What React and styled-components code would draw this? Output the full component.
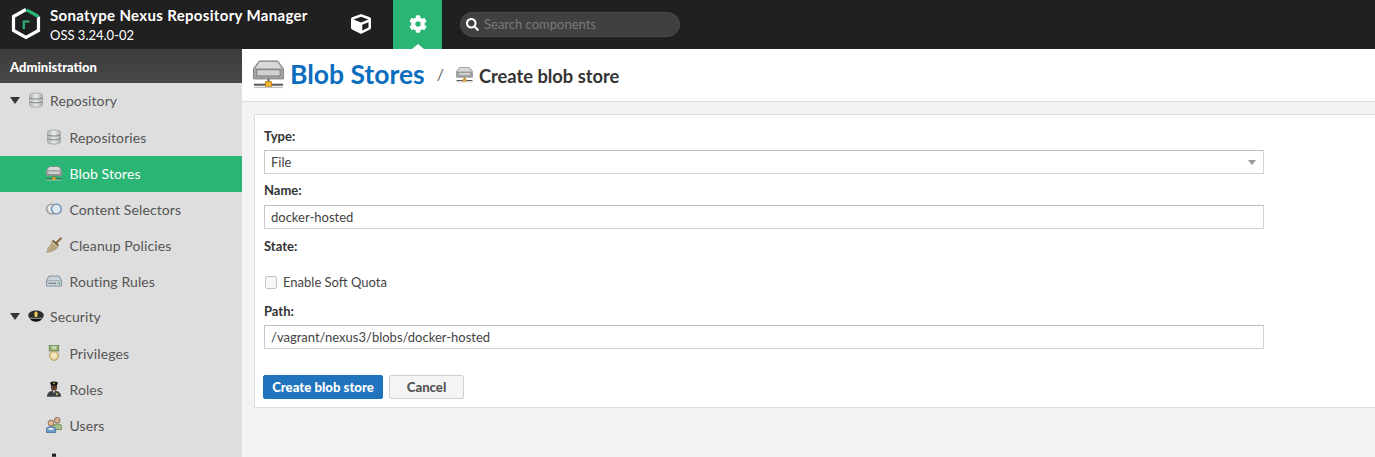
import React from "react";
import styled, { createGlobalStyle } from "styled-components";
import { FaCube, FaCog, FaSearch } from "react-icons/fa";

const Global = createGlobalStyle`
  html, body { margin: 0; padding: 0; height: 100%; overflow: hidden; }
  body { font-family: Lato, "Open Sans", "Liberation Sans", sans-serif; background: #f3f3f3; }
  #root { height: 457px; }
  * { box-sizing: border-box; }
`;

const Page = styled.div`
  display: flex; flex-direction: column; height: 457px; width: 1375px; overflow: hidden;
`;
const Header = styled.header`
  display: flex; align-items: stretch; height: 49px; background: #202020; flex: none;
`;
const Brand = styled.div`
  display: flex; align-items: center; width: 336px; padding-left: 11px; gap: 9px;
`;
const BrandText = styled.div`
  display: flex; flex-direction: column; color: #fff; gap: 4px; margin-top: -1px;
`;
const BrandTitle = styled.div`
  font-size: 15px; font-weight: 700; line-height: 18px; white-space: nowrap; letter-spacing: 0.33px;
`;
const BrandVersion = styled.div`
  font-size: 13px; line-height: 15px; font-weight: 400;
`;
const HeaderTab = styled.div`
  position: relative; display: flex; align-items: center; justify-content: center;
  width: 49px; color: #fff; font-size: ${p => p.$size || 18}px; margin-right: ${p => p.$gap || 0}px;
  background: ${p => (p.$active ? "#2ab574" : "transparent")};
  padding-bottom: 2px;
  ${p => p.$active ? `&::after {
    content: ""; position: absolute; left: 50%; bottom: 0; margin-left: -6px;
    border-left: 6px solid transparent; border-right: 6px solid transparent; border-bottom: 5px solid #fff;
  }` : ""}
`;
const Search = styled.div`
  display: flex; align-items: center; gap: 5px; align-self: center; width: 220px; height: 25px;
  margin-left: 18px; margin-bottom: 1px; padding-left: 5px; border-radius: 13px;
  background: #404040; border: 1px solid #4a4a4a; color: #fff;
`;
const SearchText = styled.span`
  color: #7a7a7a; font-size: 13px;
`;
const Main = styled.div`
  display: flex; flex: 1; min-height: 0;
`;
const Sidebar = styled.aside`
  width: 242px; flex: none; background: #dedede; overflow: hidden;
`;
const SideHead = styled.div`
  display: flex; align-items: center; height: 34px; padding: 2px 0 0 10px;
  background: linear-gradient(#3c3c3c, #484848); color: #fff; font-size: 13px; font-weight: 900;
`;
const Tree = styled.nav`
  display: flex; flex-direction: column; padding-top: 1px;
`;
const NavRow = styled.div`
  display: flex; align-items: center; height: 36px; flex: none;
  padding: ${p => (p.$top ? "0 0 4px 10px" : "0 0 2px 46px")};
  background: ${p => (p.$active ? "#2ab574" : "transparent")};
  color: ${p => (p.$active ? "#fff" : "#555")};
  font-size: 14px; letter-spacing: 0.1px; gap: ${p => (p.$top ? 6.5 : 7.5)}px;
`;
const Arrow = styled.span`
  width: 0; height: 0; border-left: 5px solid transparent; border-right: 5px solid transparent;
  border-top: 7px solid #333; margin-right: 1px;
`;
const Content = styled.main`
  flex: 1; min-width: 0; display: flex; flex-direction: column;
`;
const Crumbs = styled.div`
  display: flex; align-items: center; height: 53px; flex: none; background: #fff;
  border-bottom: 1px solid #dcdcdc; padding-left: 11px;
`;
const CrumbTitle = styled.h1`
  margin: 0 0 2px 6px; font-size: 26.5px; font-weight: 700; color: #0a6dbd; line-height: 30px;
`;
const Slash = styled.span`
  color: #666; font-size: 16px; margin: 0 12px 4px 12px;
`;
const CrumbSub = styled.h2`
  margin: 2px 0 0 6px; font-size: 18.3px; font-weight: 700; color: #333; line-height: 20px;
`;
const Panel = styled.section`
  margin: 12px 0 0 12px; height: 294px; background: #fff;
  border: 1px solid #dcdcdc; border-right: 0; padding: 13px 0 0 9px;
`;
const Label = styled.div`
  font-size: 13px; font-weight: 700; color: #333; line-height: 16px;
  margin-bottom: ${p => p.$mb ?? 6}px;
`;
const Box = styled.div`
  position: relative; width: 1000px; height: 24px; display: flex; align-items: center; padding-left: 6px;
  font-size: 13px; color: #444; margin-bottom: ${p => p.$mb ?? 8}px; background: #fff;
  border: 1px solid #d4d4d4; border-top-color: #bdbdbd; border-left-color: #c8c8c8;
`;
const Caret = styled.span`
  position: absolute; right: 7px; top: 9px; width: 0; height: 0;
  border-left: 4.5px solid transparent; border-right: 4.5px solid transparent; border-top: 5px solid #999;
`;
const CheckRow = styled.label`
  display: flex; align-items: center; gap: 6px; height: 16px; margin: 20px 0 13px 1px;
  font-size: 13px; color: #444;
`;
const Check = styled.span`
  width: 12px; height: 13px; border: 1px solid #c4c4c4; border-radius: 2px; background: #f7f7f7;
`;
const Actions = styled.div`
  display: flex; gap: 6px; margin: 26px 0 0 -1px;
`;
const Button = styled.button`
  height: 24px; padding: 0; width: ${p => p.$w}px; border-radius: 2px; font: 900 13.2px Lato, sans-serif;
  color: ${p => (p.$primary ? "#fff" : "#555")};
  background: ${p => (p.$primary ? "#2074bd" : "#f4f4f4")};
  border: 1px solid ${p => (p.$primary ? "#2074bd" : "#cfcfcf")};
`;
const Glyph = styled.svg`
  flex: none; display: block;
`;

const Logo = () => (
  <Glyph width="30" height="33" viewBox="0 0 30 33" fill="none">
    <path d="M15 1.5 L2.5 8.5 V22.5 L15 29.5 L27.5 22.5 V8.5" stroke="#fff" strokeWidth="3.2" />
    <path d="M15.5 1.8 L27.5 8.5" stroke="#2ab574" strokeWidth="3.2" />
    <path d="M12.8 21 V13.5 H18.5" stroke="#2ab574" strokeWidth="2.2" />
  </Glyph>
);

const Drive = ({ size = 16 }) => (
  <Glyph width={size} height={size * 30 / 32} viewBox="0 0 32 30">
    <path d="M6.5 1 H25.5 L31.5 9 V19.5 H.5 V9 Z" fill="#a5a5a5" stroke="#808080" />
    <path d="M7 2 H25 L29.5 8.5 H2.5 Z" fill="#d8d8d8" />
    <rect x="4" y="10" width="24" height="6.5" fill="#d0d0d0" stroke="#7c7c7c" />
    <rect x="15" y="19.5" width="2" height="5" fill="#666" />
    <rect x="1" y="24.5" width="30" height="2" fill="#555" />
    <rect x="13" y="22.5" width="6" height="5" fill="#f5b930" stroke="#b97f10" />
    <rect x="1" y="27.5" width="30" height="1.5" fill="#c4c4c4" />
  </Glyph>
);

const Database = () => (
  <Glyph width="16" height="16" viewBox="0 0 16 16">
    <defs>
      <linearGradient id="db" x1="0" x2="1" y1="0" y2="0">
        <stop offset="0" stopColor="#aeb3b3" />
        <stop offset=".5" stopColor="#e9ebeb" />
        <stop offset="1" stopColor="#a9adad" />
      </linearGradient>
    </defs>
    <path d="M1.5 3 C1.5 .4 14.5 .4 14.5 3 V13 C14.5 15.8 1.5 15.8 1.5 13 Z" fill="url(#db)" stroke="#a8adad" />
    <path d="M1.5 6 C4 7.4 12 7.4 14.5 6 M1.5 9.8 C4 11.2 12 11.2 14.5 9.8" stroke="#7f8484" fill="none" />
  </Glyph>
);

const Venn = () => (
  <Glyph width="16" height="16" viewBox="0 0 16 16">
    <circle cx="5.6" cy="8" r="4.9" fill="#e6e6e6" stroke="#9a9a9a" strokeWidth="1.4" />
    <circle cx="10.4" cy="8" r="4.9" fill="#dfe8ef" stroke="#6f93b4" strokeWidth="1.4" />
  </Glyph>
);

const Broom = () => (
  <Glyph width="16" height="16" viewBox="0 0 16 16">
    <path d="M9.5 6.5 L15.5 .8" stroke="#8a6a3a" strokeWidth="2" />
    <path d="M6.8 3.2 L12.6 8.6 C11 12.5 5 15.6 .4 15 C2.4 13.4 2.4 12.4 1.6 11 C4 10 5.5 6.8 6.8 3.2 Z" fill="#c4b08c" stroke="#8e7b58" strokeWidth=".6" />
    <path d="M7 3.5 L12.2 8.2" stroke="#6b5836" strokeWidth="1.6" />
    <path d="M8 8 L4 13.6 M10 10 L6.5 14" stroke="#8e7b58" strokeWidth=".7" />
  </Glyph>
);

const Router = () => (
  <Glyph width="16" height="16" viewBox="0 0 16 16">
    <path d="M3 3 H13 L15.5 7.5 V13 H.5 V7.5 Z" fill="#c9d3da" stroke="#7a8791" strokeWidth=".9" />
    <path d="M1 7.7 H15" stroke="#8f9aa2" strokeWidth=".7" />
    <path d="M2.5 10.4 H10.5" stroke="#555" strokeWidth="1.4" strokeDasharray="1 .6" />
    <rect x="12.2" y="9.6" width="1.8" height="1.6" fill="#4fa84f" />
  </Glyph>
);

const Cap = () => (
  <Glyph width="16" height="16" viewBox="0 0 16 16">
    <path d="M.3 7.5 C.3 .8 15.7 .8 15.7 7.5 C15.7 9.5 14 10.5 14 10.5 H2 C2 10.5 .3 9.5 .3 7.5 Z" fill="#2d2d2d" />
    <path d="M2 11 C4.5 14.5 11.5 14.5 14 11 Z" fill="#111" />
    <rect x="1.6" y="9.8" width="12.8" height="1.2" fill="#858585" />
    <path d="M8 3 L9.8 5 L9.2 9 H6.8 L6.2 5 Z" fill="#e6c860" />
  </Glyph>
);

const Medal = () => (
  <Glyph width="16" height="16" viewBox="0 0 16 16">
    <rect x="3.2" y="0.5" width="9.6" height="5.5" fill="#86ac66" stroke="#5f7f48" strokeWidth=".7" />
    <rect x="5.5" y="1" width="5" height="3.5" fill="#c3d6ae" />
    <circle cx="8" cy="10.7" r="4.6" fill="#e5cf92" stroke="#b49d62" />
    <circle cx="8" cy="10.7" r="2.7" fill="#f2e5bf" />
  </Glyph>
);

const Officer = () => (
  <Glyph width="16" height="16" viewBox="0 0 16 16">
    <path d="M1 15.7 C1 10.8 5 9.8 8 9.8 C11 9.8 15 10.8 15 15.7 Z" fill="#3a3f44" />
    <circle cx="8" cy="6.5" r="3.2" fill="#5f412c" />
    <path d="M4 1.8 C6 .2 10 .2 12 1.8 L10.8 4.8 H5.2 Z" fill="#171717" />
    <rect x="7.3" y="1.6" width="1.4" height="1.6" fill="#e6c860" />
    <rect x="10.2" y="12" width="1.5" height="2.2" fill="#e6c860" />
    <path d="M6.8 9.8 L8 12.2 L9.2 9.8 Z" fill="#ddd" />
  </Glyph>
);

const Users = () => (
  <Glyph width="16" height="16" viewBox="0 0 16 16">
    <circle cx="11.2" cy="3.3" r="2.9" fill="#d6b08c" stroke="#6d5038" strokeWidth=".7" />
    <path d="M7.5 12.5 V8.6 C7.5 6.6 15.5 6.6 15.5 8.6 V12.5 Z" fill="#a7c08c" stroke="#64804d" strokeWidth=".7" />
    <circle cx="5" cy="6" r="2.9" fill="#e0b896" stroke="#6d5038" strokeWidth=".7" />
    <path d="M.4 15.5 V11.6 C.4 9.2 9.6 9.2 9.6 11.6 V15.5 Z" fill="#6f9cc9" stroke="#3a6591" strokeWidth=".7" />
    <rect x="2.6" y="11.2" width="4.8" height="1.5" fill="#fff" />
  </Glyph>
);

const Anon = () => (
  <Glyph width="16" height="16" viewBox="0 0 16 16">
    <path d="M6 1 C7 .4 9 .4 10 1 V4 H6 Z" fill="#222" />
    <circle cx="8" cy="6" r="3" fill="#555" />
    <path d="M2 15.5 C2 11 5 10 8 10 C11 10 14 11 14 15.5 Z" fill="#444" />
  </Glyph>
);

const groups = [
  { label: "Repository", icon: <Database />, items: [
    { label: "Repositories", icon: <Database /> },
    { label: "Blob Stores", icon: <Drive />, active: true },
    { label: "Content Selectors", icon: <Venn /> },
    { label: "Cleanup Policies", icon: <Broom /> },
    { label: "Routing Rules", icon: <Router /> },
  ]},
  { label: "Security", icon: <Cap />, items: [
    { label: "Privileges", icon: <Medal /> },
    { label: "Roles", icon: <Officer /> },
    { label: "Users", icon: <Users /> },
    { icon: <Anon /> },
  ]},
];

export default function App() {
  return (
    <Page>
      <Global />
      <Header>
        <Brand>
          <Logo />
          <BrandText>
            <BrandTitle>Sonatype Nexus Repository Manager</BrandTitle>
            <BrandVersion>OSS 3.24.0-02</BrandVersion>
          </BrandText>
        </Brand>
        <HeaderTab $gap={8} $size={20}><FaCube /></HeaderTab>
        <HeaderTab $active><FaCog /></HeaderTab>
        <Search>
          <FaSearch size={13} />
          <SearchText>Search components</SearchText>
        </Search>
      </Header>
      <Main>
        <Sidebar>
          <SideHead>Administration</SideHead>
          <Tree>
            {groups.map(g => (
              <React.Fragment key={g.label}>
                <NavRow $top><Arrow />{g.icon}<span>{g.label}</span></NavRow>
                {g.items.map((i, n) => (
                  <NavRow key={n} $active={i.active}>{i.icon}{i.label && <span>{i.label}</span>}</NavRow>
                ))}
              </React.Fragment>
            ))}
          </Tree>
        </Sidebar>
        <Content>
          <Crumbs>
            <Drive size={31} />
            <CrumbTitle>Blob Stores</CrumbTitle>
            <Slash>/</Slash>
            <Drive size={17} />
            <CrumbSub>Create blob store</CrumbSub>
          </Crumbs>
          <Panel>
            <Label>Type:</Label>
            <Box>File<Caret /></Box>
            <Label $mb={7}>Name:</Label>
            <Box $mb={9}>docker-hosted</Box>
            <Label $mb={0}>State:</Label>
            <CheckRow><Check />Enable Soft Quota</CheckRow>
            <Label>Path:</Label>
            <Box $mb={0}>/vagrant/nexus3/blobs/docker-hosted</Box>
            <Actions>
              <Button $primary $w={120}>Create blob store</Button>
              <Button $w={75}>Cancel</Button>
            </Actions>
          </Panel>
        </Content>
      </Main>
    </Page>
  );
}
